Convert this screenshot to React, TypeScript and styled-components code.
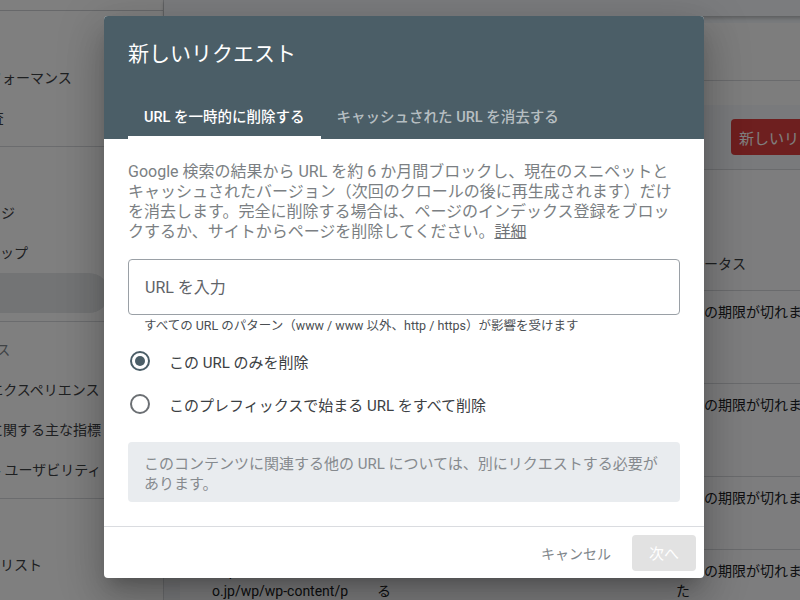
import React from "react";
import styled, { createGlobalStyle } from "styled-components";

const GlobalStyle = createGlobalStyle`
  html, body { margin: 0; padding: 0; }
  body { font-family: Roboto, "Noto Sans CJK JP", sans-serif; }
  * { box-sizing: border-box; }
`;

const FONT = `Roboto, "Noto Sans CJK JP", sans-serif`;

const Page = styled.div`
  position: relative;
  width: 800px;
  height: 600px;
  overflow: hidden;
  display: flex;
  background: #f2f5f9;
  font-family: ${FONT};
`;

/* ---------- background: sidebar ---------- */
const Sidebar = styled.nav`
  flex: 0 0 164px;
  background: #fff;
  border-right: 1px solid #d6d8dc;
  display: flex;
  flex-direction: column;
  overflow: hidden;
`;

const SideTop = styled.div`
  flex: none;
  height: 11px;
  border-bottom: 1px solid #cfd1d5;
`;

const NavList = styled.div`
  display: flex;
  flex-direction: column;
  padding-top: 7px;
`;

const NavItem = styled.div<{ $shift: number; $selected?: boolean }>`
  flex: none;
  height: 40px;
  line-height: 40px;
  font-size: 14px;
  color: #3c4043;
  white-space: nowrap;
  overflow: hidden;
  text-indent: ${(p) => p.$shift}px;
  margin-right: 54px;
  background: ${(p) => (p.$selected ? "#e6e8eb" : "transparent")};
  border-radius: 0 20px 20px 0;
`;

const NavSection = styled.div<{ $shift: number; $h?: number }>`
  flex: none;
  height: ${(p) => p.$h ?? 38}px;
  line-height: ${(p) => p.$h ?? 38}px;
  font-size: 14px;
  color: #80868b;
  white-space: nowrap;
  overflow: hidden;
  text-indent: ${(p) => p.$shift}px;
`;

const NavDivider = styled.div`
  flex: none;
  height: 1px;
  background: #d6d8dc;
  margin: 8px 0;
`;

/* ---------- background: main ---------- */
const Main = styled.main`
  flex: 0 0 744px;
  display: flex;
  flex-direction: column;
`;

const TopBar = styled.div`
  flex: none;
  height: 16px;
  background: #f7f9fc;
  box-shadow: 0 2px 4px rgba(0, 0, 0, 0.25);
`;

const Content = styled.div`
  flex: 1;
  padding: 7px 16px 0 16px;
  display: flex;
  flex-direction: column;
`;

const HeadCard = styled.div`
  flex: none;
  background: #fbfbfb;
  border-radius: 8px 8px 0 0;
  height: 82px;
  display: flex;
  flex-direction: column;
`;

const HeadTitle = styled.div`
  height: 58px;
  border-bottom: 1px solid #d4d6da;
`;

const ActionRow = styled.div`
  flex: none;
  height: 65px;
  display: flex;
  justify-content: flex-end;
  align-items: center;
  padding-right: 25px;
  border-bottom: 1px solid #d4d6da;
`;

const RedButton = styled.div`
  height: 36px;
  padding: 0 8px;
  border-radius: 4px;
  background: #dc3e3e;
  color: #fff;
  font-size: 15px;
  display: flex;
  align-items: center;
  white-space: nowrap;
`;

const TableCard = styled.div`
  flex: 1;
  background: #fafbfc;
  display: flex;
  flex-direction: column;
`;

const TableToolbar = styled.div`
  height: 65px;
`;

const Grid = styled.div`
  display: grid;
  grid-template-columns: 16px 165px 165px 134px 160px;
  padding-left: 16px;
`;

const HeaderRow = styled(Grid)`
  height: 56px;
  align-items: center;
  border-bottom: 1px solid #d4d6da;
  font-size: 14px;
  color: #3c4043;
`;

const Row = styled(Grid)<{ $h: number }>`
  height: ${(p) => p.$h}px;
  border-bottom: 1px solid #d4d6da;
  padding-top: 11px;
  font-size: 14px;
  line-height: 20px;
  color: #202124;
`;

const Cell = styled.div`
  padding-right: 16px;
`;

const StatusCell = styled.div`
  width: 146px;
`;

/* ---------- dialog ---------- */
const Scrim = styled.div`
  position: absolute;
  inset: 0;
  background: rgba(0, 0, 0, 0.5);
  display: flex;
  align-items: center;
  justify-content: center;
  padding: 0 0 6px 8px;
`;

const Dialog = styled.div`
  width: 600px;
  height: 562px;
  background: #fff;
  border-radius: 4px;
  overflow: hidden;
  display: flex;
  flex-direction: column;
  box-shadow: 0 11px 15px -7px rgba(0, 0, 0, 0.2),
    0 24px 38px 3px rgba(0, 0, 0, 0.14), 0 9px 46px 8px rgba(0, 0, 0, 0.12);
`;

const Header = styled.header`
  flex: none;
  background: #4b5e67;
  padding: 24px 24px 0;
  color: #fff;
`;

const Title = styled.h2`
  margin: 0;
  font-size: 21px;
  line-height: 28px;
  font-weight: 400;
`;

const Tabs = styled.div`
  display: flex;
  margin-top: 23px;
`;

const Tab = styled.div<{ $active?: boolean }>`
  height: 48px;
  padding: 0 16px;
  display: flex;
  align-items: center;
  font-size: 14.5px;
  font-weight: 500;
  white-space: nowrap;
  color: ${(p) => (p.$active ? "#ffffff" : "rgba(255,255,255,0.62)")};
  box-shadow: ${(p) => (p.$active ? "inset 0 -3px 0 #ffffff" : "none")};
`;

const Body = styled.div`
  flex: 1;
  padding: 23px 24px 0;
  display: flex;
  flex-direction: column;
`;

const Description = styled.p`
  margin: 0;
  font-size: 16px;
  line-height: 20px;
  color: #7b7f83;
  white-space: nowrap;
`;

const Link = styled.a`
  color: #6f7377;
  text-decoration: underline;
`;

const UrlInput = styled.input`
  margin-top: 17px;
  height: 56px;
  width: 100%;
  border: 1px solid #9aa0a6;
  border-radius: 4px;
  padding: 0 16px;
  font-family: ${FONT};
  font-size: 16px;
  color: #202124;
  outline: none;
  &::placeholder {
    color: #5f6368;
  }
`;

const Helper = styled.div`
  margin: 3px 0 0 16px;
  font-size: 12.5px;
  line-height: 16px;
  color: #4a4e52;
  white-space: nowrap;
`;

const RadioGroup = styled.div`
  margin-top: 7px;
  display: flex;
  flex-direction: column;
  gap: 3px;
`;

const RadioRow = styled.label`
  height: 40px;
  display: flex;
  align-items: center;
  padding-left: 2px;
  font-size: 15px;
  color: #3c4043;
`;

const RadioCircle = styled.span<{ $checked?: boolean }>`
  flex: none;
  width: 20px;
  height: 20px;
  border-radius: 50%;
  border: 2px solid ${(p) => (p.$checked ? "#4b5e67" : "#6b6f73")};
  display: flex;
  align-items: center;
  justify-content: center;
  margin-right: 19px;
  &::after {
    content: "";
    width: 10px;
    height: 10px;
    border-radius: 50%;
    background: ${(p) => (p.$checked ? "#4b5e67" : "transparent")};
  }
`;

const InfoBox = styled.div`
  margin-top: 18px;
  height: 60px;
  background: #e9ecef;
  border-radius: 4px;
  padding: 12px 16px 8px;
  font-size: 15px;
  line-height: 20px;
  color: #868a8e;
`;

const Footer = styled.footer`
  flex: none;
  height: 52px;
  border-top: 1px solid #dadce0;
  display: flex;
  justify-content: flex-end;
  align-items: center;
  padding: 0 8px;
  gap: 5px;
`;

const TextButton = styled.button`
  height: 36px;
  padding: 0 16px;
  border: none;
  background: transparent;
  font-family: ${FONT};
  font-size: 14px;
  color: #80868b;
`;

const FilledButton = styled.button`
  width: 64px;
  height: 36px;
  border: none;
  border-radius: 4px;
  background: #e2e2e2;
  font-family: ${FONT};
  font-size: 15px;
  color: #ffffff;
`;

const rows = [
  { h: 93, url: ["https://www.wa-studi", "o.jp/wp/wp-content/p", "lugins/"] },
  { h: 93, url: ["https://www.wa-studi", "o.jp/wp/wp-content/p", "lugins/"] },
  { h: 73, url: ["https://www.wa-studi", "o.jp/wp/wp-content/p"] },
  { h: 93, url: ["https://www.wa-studi", "o.jp/wp/wp-content/p", "lugins/"] },
];

export default function App() {
  return (
    <>
      <GlobalStyle />
      <Page>
        <Sidebar>
          <SideTop />
          <NavList>
            <NavItem $shift={-56}>概要</NavItem>
            <NavItem $shift={-26}>パフォーマンス</NavItem>
            <NavItem $shift={-53}>URL 検査</NavItem>
            <NavDivider />
            <NavSection $shift={-90}>インデックス</NavSection>
            <NavItem $shift={-55}>カバレッジ</NavItem>
            <NavItem $shift={-56}>サイトマップ</NavItem>
            <NavItem $shift={-56} $selected>
              削除
            </NavItem>
            <NavDivider />
            <NavSection $shift={-100} $h={40}>
              エクスペリエンス
            </NavSection>
            <NavItem $shift={-56}>ページ エクスペリエンス</NavItem>
            <NavItem $shift={-53}>ウェブに関する主な指標</NavItem>
            <NavItem $shift={-55}>モバイル ユーザビリティ</NavItem>
            <NavDivider />
            <NavSection $shift={-200}>セキュリティと手動による対策</NavSection>
            <NavItem $shift={-56}>ブロックリスト</NavItem>
          </NavList>
        </Sidebar>
        <Main>
          <TopBar />
          <Content>
            <HeadCard>
              <HeadTitle />
            </HeadCard>
            <ActionRow>
              <RedButton>新しいリクエスト</RedButton>
            </ActionRow>
            <TableCard>
              <TableToolbar />
              <HeaderRow>
                <span />
                <Cell>URL</Cell>
                <Cell>種類</Cell>
                <Cell>リクエスト日</Cell>
                <Cell>ステータス</Cell>
              </HeaderRow>
              {rows.map((r, i) => (
                <Row key={i} $h={r.h}>
                  <span />
                  <Cell>
                    {r.url.map((l, j) => (
                      <div key={j}>{l}</div>
                    ))}
                  </Cell>
                  <Cell>URL を一時的に削除す る</Cell>
                  <Cell>2021/06/25</Cell>
                  <StatusCell>削除の期限が切れました</StatusCell>
                </Row>
              ))}
            </TableCard>
          </Content>
        </Main>

        <Scrim>
          <Dialog role="dialog">
            <Header>
              <Title>新しいリクエスト</Title>
              <Tabs>
                <Tab $active>URL を一時的に削除する</Tab>
                <Tab>キャッシュされた URL を消去する</Tab>
              </Tabs>
            </Header>
            <Body>
              <Description>
                Google 検索の結果から URL を約 6 か月間ブロックし、現在のスニペットと
                <br />
                キャッシュされたバージョン（次回のクロールの後に再生成されます）だけ
                <br />
                を消去します。完全に削除する場合は、ページのインデックス登録をブロッ
                <br />
                クするか、サイトからページを削除してください。<Link>詳細</Link>
              </Description>
              <UrlInput placeholder="URL を入力" />
              <Helper>
                すべての URL のパターン（www / www 以外、http / https）が影響を受けます
              </Helper>
              <RadioGroup>
                <RadioRow>
                  <RadioCircle $checked />
                  この URL のみを削除
                </RadioRow>
                <RadioRow>
                  <RadioCircle />
                  このプレフィックスで始まる URL をすべて削除
                </RadioRow>
              </RadioGroup>
              <InfoBox>
                このコンテンツに関連する他の URL については、別にリクエストする必要があります。
              </InfoBox>
            </Body>
            <Footer>
              <TextButton>キャンセル</TextButton>
              <FilledButton>次へ</FilledButton>
            </Footer>
          </Dialog>
        </Scrim>
      </Page>
    </>
  );
}
